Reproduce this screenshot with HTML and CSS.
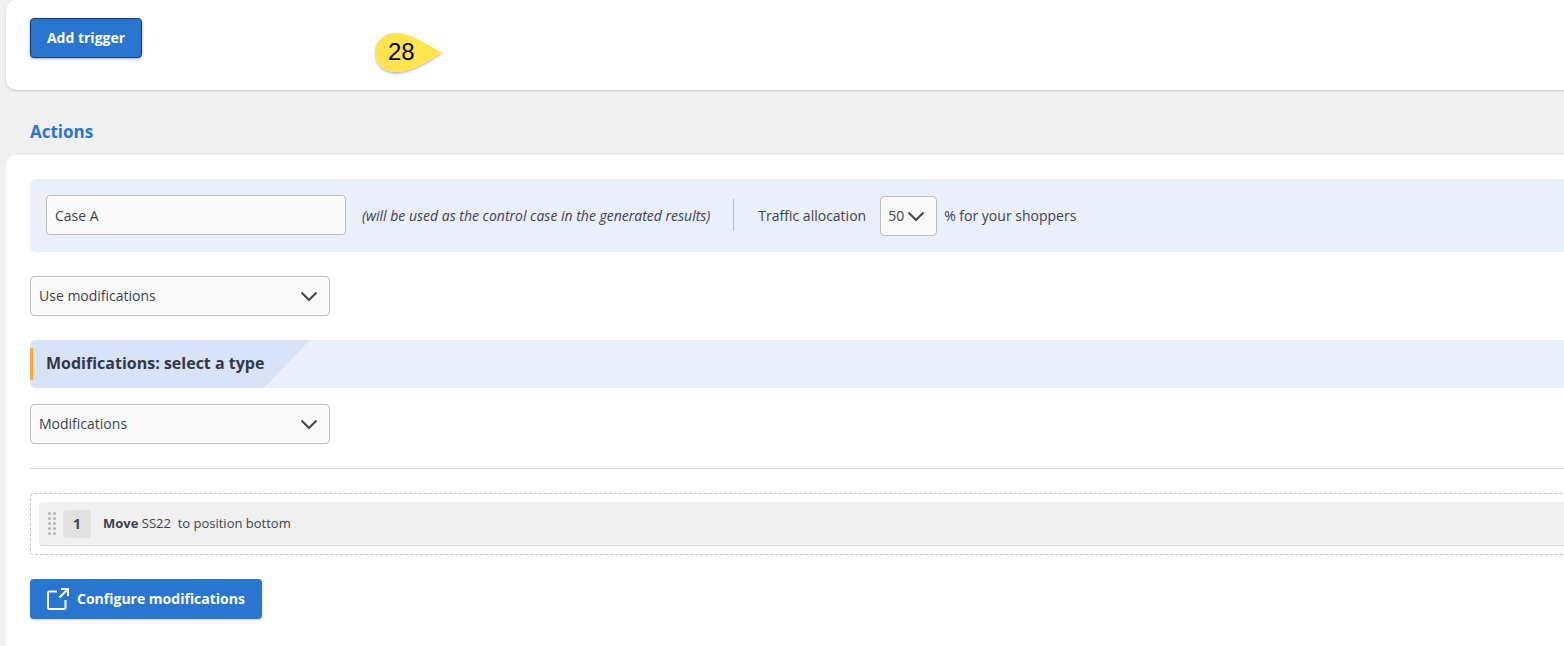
FILE: index.html
```html
<!DOCTYPE html>
<html lang="en">
<head>
<meta charset="utf-8">
<title>Actions</title>
<link rel="stylesheet" href="styles.css">
</head>
<body>
<div class="page">
  <section class="card card-top">
    <button class="btn btn-outlined"><span class="lift">Add trigger</span></button>
    <div class="marker">
      <svg class="marker-shape" width="72" height="46" viewBox="0 0 72 46"><defs><filter id="ms" x="-10%" y="-10%" width="120%" height="130%"><feDropShadow dx="0" dy="1.5" stdDeviation="1.2" flood-color="#000" flood-opacity=".3"/></filter></defs><path d="M22 2C36 2 50 12 68 21.500C52 31 38 41 22 41C10 41 1 32.500 1 21.500C1 10.500 10 2 22 2Z" fill="#ffe34f" filter="url(#ms)"/></svg>
      <span class="marker-text">28</span>
    </div>
  </section>
  <h2 class="section-title">Actions</h2>
  <section class="card card-main">
    <div class="case-bar">
      <div class="field case-input"><span>Case A</span></div>
      <em class="case-note">(will be used as the control case in the generated results)</em>
      <span class="vsep"></span>
      <span class="label">Traffic allocation</span>
      <div class="field select-mini"><span class="lift">50</span><svg class="chev" width="18" height="11" viewBox="0 0 18 11"><path d="M1.500 1.500L9 9L16.500 1.500" fill="none" stroke="#444" stroke-width="2"/></svg></div>
      <span class="label">% for your shoppers</span>
    </div>
    <div class="field select"><span class="lift">Use modifications</span><svg class="chev" width="18" height="11" viewBox="0 0 18 11"><path d="M1.500 1.500L9 9L16.500 1.500" fill="none" stroke="#444" stroke-width="2"/></svg></div>
    <div class="type-head"><div class="type-tab"><span class="lift">Modifications: select a type</span></div></div>
    <div class="field select select-second"><span class="lift">Modifications</span><svg class="chev" width="18" height="11" viewBox="0 0 18 11"><path d="M1.500 1.500L9 9L16.500 1.500" fill="none" stroke="#444" stroke-width="2"/></svg></div>
    <hr class="rule">
    <div class="drop-zone">
      <div class="mod-row">
        <svg class="grip" width="8" height="23" viewBox="0 0 8 23"><g fill="#b4b4b4"><circle cx="1.500" cy="1.500" r="1.500"/><circle cx="6.500" cy="1.500" r="1.500"/><circle cx="1.500" cy="6.500" r="1.500"/><circle cx="6.500" cy="6.500" r="1.500"/><circle cx="1.500" cy="11.500" r="1.500"/><circle cx="6.500" cy="11.500" r="1.500"/><circle cx="1.500" cy="16.500" r="1.500"/><circle cx="6.500" cy="16.500" r="1.500"/><circle cx="1.500" cy="21.500" r="1.500"/><circle cx="6.500" cy="21.500" r="1.500"/></g></svg>
        <span class="mod-num">1</span>
        <span class="mod-text lift"><b>Move</b> SS22&nbsp; to position bottom</span>
      </div>
    </div>
    <button class="btn btn-config">
      <svg width="22" height="22" viewBox="0 0 22 22" fill="none" stroke="#fff" stroke-width="2"><path d="M10 3.500H2.500A1.500 1.500 0 0 0 1 5V19.500A1.500 1.500 0 0 0 2.500 21H17A1.500 1.500 0 0 0 18.500 19.500V12"/><path d="M12.500 9.500L21 1M14 1H21V8"/></svg>
      <span class="lift">Configure modifications</span>
    </button>
  </section>
</div>
</body>
</html>
```
FILE: styles.css
```css
* { box-sizing: border-box; }
html, body { margin: 0; height: 100%; overflow: hidden; background: #f0f0f0; }
body { font-family: "Open Sans", sans-serif; color: #3c4250; font-size: 14px; }
.page { width: 1600px; height: 646px; padding-left: 6px; }
.lift { margin-bottom: 2px; }
.card { background: #fff; border-radius: 10px 0 0 10px; }
.card-top { position: relative; height: 90px; padding: 18px 24px; box-shadow: 0 1px 2px rgba(0,0,0,.18); }
.btn { display: flex; align-items: center; height: 40px; border-radius: 4px; color: #fff; background: #2a75d0; font: 700 14px "Open Sans", sans-serif; }
.btn-outlined { width: 112px; justify-content: center; border: 1px solid #123f7c; box-shadow: 0 1px 3px rgba(0,0,0,.35); }
.marker { position: absolute; left: 368px; top: 31px; width: 72px; height: 46px; }
.marker-shape { display: block; }
.marker-text { position: absolute; left: 14px; top: 7px; font: 24px/28px "Liberation Sans", sans-serif; color: #000; }
.section-title { margin: 0; height: 65px; padding: 31px 0 0 24px; font-size: 17px; line-height: 22px; font-weight: 700; color: #2a75d0; }
.card-main { height: 520px; padding: 24px 0 0 24px; }
.case-bar { display: flex; align-items: center; height: 73px; padding: 0 0 1px 16px; background: #ebeffb; border-radius: 6px 0 0 6px; }
.field { display: flex; align-items: center; height: 40px; background: #fafafa; border: 1px solid #bdbdbd; border-radius: 4px; font-size: 14px; }
.case-input { width: 300px; padding-left: 8px; }
.case-note { margin-left: 16px; font-size: 14px; }
.vsep { width: 1px; height: 32px; margin: 0 24px 0 23px; background: #bdbdbd; }
.label { font-size: 14px; }
.select-mini { width: 57px; margin: 2px 7px 0 14px; padding-left: 7px; gap: 3px; }
.select { justify-content: space-between; width: 300px; margin-top: 24px; padding: 0 11px 0 8px; }
.select-second { margin-top: 16px; }
.type-head { height: 48px; margin-top: 24px; background: #ebeffb; border-radius: 6px 0 0 6px; overflow: hidden; }
.type-tab { display: flex; align-items: center; width: 280px; height: 48px; padding-left: 16px; font-size: 16px; font-weight: 700; color: #333844; background: #d8e2f9; clip-path: polygon(0 0, 100% 0, 234px 100%, 0 100%); position: relative; }
.type-tab::before { content: ""; position: absolute; left: 0; top: 8px; height: 32px; width: 3px; background: #ffa63d; }
.rule { height: 1px; margin: 24px 0; border: 0; background: #dcdcdc; }
.drop-zone { height: 62px; padding: 8px 0 8px 8px; border: 1px dashed #c4c4c4; border-right: 0; border-radius: 4px 0 0 4px; }
.mod-row { display: flex; align-items: center; height: 44px; background: #f0f0f0; border-bottom: 1px solid #d6d6d6; border-radius: 4px 0 0 4px; padding-left: 9px; }
.grip { flex: none; }
.mod-num { display: flex; align-items: center; justify-content: center; width: 28px; height: 28px; margin-left: 7px; background: #e1e1e1; border-radius: 4px; font-weight: 700; font-size: 14px; }
.mod-text { margin-left: 12px; font-size: 13px; }
.btn-config { width: 232px; margin-top: 24px; padding: 0 0 0 17px; gap: 8px; border: 0; box-shadow: 0 1px 2px rgba(0,0,0,.2); }
```
